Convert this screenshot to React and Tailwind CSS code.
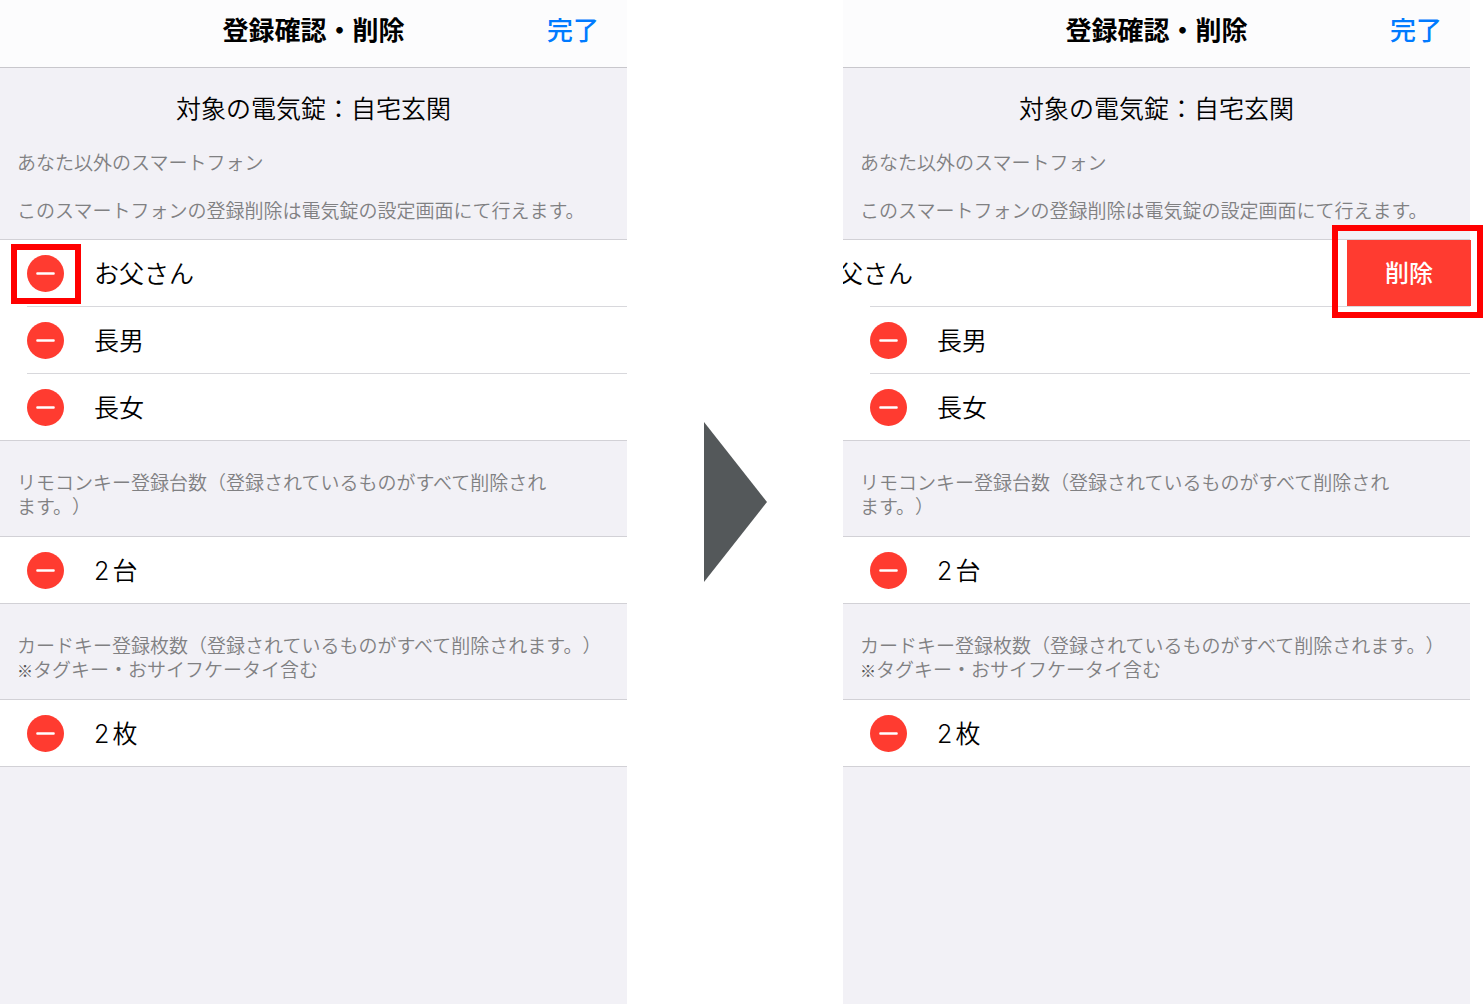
import React from 'react';
import clsx from 'clsx';

const PHONES = ['お父さん', '長男', '長女'];

export default function App() {
  return (
    <main
      lang="ja"
      className="flex min-h-screen bg-white pr-[13px] font-['Inter','Noto_Sans_CJK_JP',sans-serif] font-[350] text-black [text-autospace:normal] [text-spacing-trim:space-all]"
    >
      <RegistrationScreen step="select" />
      <div className="flex w-[216px] shrink-0 items-center justify-center">
        <svg width="64" height="160" viewBox="0 0 64 160" aria-hidden="true">
          <path d="M1 0L64 80L1 160Z" fill="#54585a" />
        </svg>
      </div>
      <RegistrationScreen step="confirm" />
    </main>
  );
}

function RegistrationScreen({ step }) {
  return (
    <section className="min-w-0 flex-1 bg-[#f2f1f6]">
      <header className="grid h-[68px] grid-cols-[1fr_auto_1fr] items-center border-b border-[#c8c7cc] bg-[#fcfcfd] pb-1.5">
        <h1 className="col-start-2 text-[26px] leading-9 font-bold">登録確認・削除</h1>
        <button type="button" className="mr-7 justify-self-end text-[26px] leading-9 font-medium text-[#007aff]">
          完了
        </button>
      </header>

      <div className="px-[17px] pt-[23px] pb-[15px]">
        <p className="text-center text-[25px] leading-9">対象の電気錠：自宅玄関</p>
        <h2 className="mt-[25px] text-[19px] leading-6 font-[350] text-[#808082]">あなた以外のスマートフォン</h2>
        <p className="mt-6 text-[19px] leading-6 whitespace-nowrap text-[#808082]">
          このスマートフォンの登録削除は電気錠の設定画面にて行えます。
        </p>
      </div>
      <List>
        {PHONES.map((name, i) => (
          <Row
            key={name}
            label={name}
            divider={i < PHONES.length - 1}
            marked={i === 0 && step === 'select'}
            swiped={i === 0 && step === 'confirm'}
          />
        ))}
      </List>

      <SectionHeader>
        リモコンキー登録台数（登録されているものがすべて削除され
        <br />
        ます。）
      </SectionHeader>
      <List>
        <Row label="2台" />
      </List>

      <SectionHeader>
        カードキー登録枚数（登録されているものがすべて削除されます。）
        <br />
        <span className="font-['Noto_Sans_CJK_JP'] text-base leading-5 text-[#555]">※</span>
        タグキー・おサイフケータイ含む
      </SectionHeader>
      <List>
        <Row label="2枚" />
      </List>
    </section>
  );
}

function SectionHeader({ children }) {
  return (
    <h2 className="px-[17px] pt-[31px] pb-4 text-[19px] leading-6 font-[350] whitespace-nowrap text-[#808082]">
      {children}
    </h2>
  );
}

function List({ children }) {
  return <ul className="border-y border-[#d2d1d6] bg-white">{children}</ul>;
}

function Row({ label, divider, marked, swiped }) {
  return (
    <li className="relative">
      <div className="flex h-[66px] items-center">
        <div className="h-full min-w-0 flex-1 overflow-hidden">
          {/* swiped rows slide left by the width of the delete button */}
          <div className={clsx('flex h-full items-center gap-[30px] pt-px pl-[27px]', swiped && '-ml-[124px]')}>
            <button type="button" aria-label={`${label}を削除`} className="relative shrink-0">
              <svg width="37" height="37" viewBox="0 0 36 36" className="block" aria-hidden="true">
                <circle cx="18" cy="18" r="18" fill="#ff3b30" />
                <rect x="9" y="16.7" width="18" height="2.6" rx="1" fill="#fff" />
              </svg>
              {marked && <span className="absolute -top-[11px] -left-4 h-[60px] w-[70px] border-6 border-[#ff0000]" />}
            </button>
            <span className="text-[25px] leading-9 whitespace-nowrap">{label}</span>
          </div>
        </div>
        {swiped && (
          <button type="button" className="-mr-px h-full w-[124px] bg-[#ff3b30] pt-0.5 text-2xl font-medium text-white">
            削除
          </button>
        )}
      </div>
      {divider && <div className="ml-[27px] h-px bg-[#d8d8dc]" />}
      {swiped && <span className="absolute -top-[15px] -right-[13px] h-[93px] w-[151px] border-6 border-[#ff0000]" />}
    </li>
  );
}
